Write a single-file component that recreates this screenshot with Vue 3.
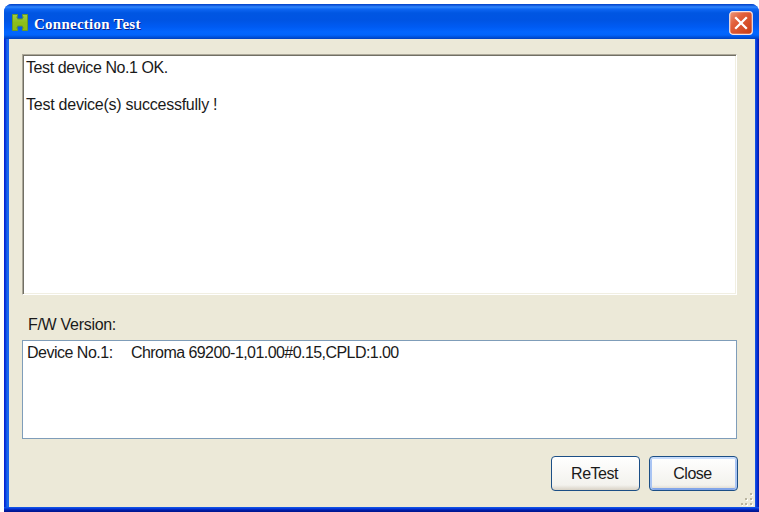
<script setup>
const messages = ['Test device No.1 OK.', '', 'Test device(s) successfully !']
const device = { name: 'Device No.1:', version: 'Chroma 69200-1,01.00#0.15,CPLD:1.00' }
</script>

<template>
  <div class="screen">
    <section class="window" role="dialog" aria-label="Connection Test">
      <header class="titlebar">
        <svg class="logo" width="16" height="17" viewBox="0 0 16 17">
          <defs>
            <linearGradient id="leaf" x1="0" y1="0" x2="0" y2="1">
              <stop offset="0" stop-color="#a3cc44" />
              <stop offset=".5" stop-color="#8cbf1c" />
              <stop offset="1" stop-color="#8cbb14" />
            </linearGradient>
          </defs>
          <path d="M.5 .5H5.5V2L4.8 3L5.5 4.5V5H10.5V4.5L11.2 3L10.5 2V.5H15.5V16.5H10.5V15L11.2 14L10.5 12.5V12H5.5V12.5L4.8 14L5.5 15V16.5H.5Z" fill="url(#leaf)" stroke="#659c28" stroke-width="1" />
        </svg>
        <h1 class="title">Connection Test</h1>
        <button class="exit" aria-label="Close window">
          <svg width="24" height="24" viewBox="0 0 24 24">
            <defs>
              <linearGradient id="red" x1="0" y1="0" x2="1" y2="1">
                <stop offset="0" stop-color="#ed9a7c" />
                <stop offset=".35" stop-color="#e2603b" />
                <stop offset="1" stop-color="#c83a12" />
              </linearGradient>
            </defs>
            <rect x=".7" y=".7" width="22.6" height="22.6" rx="3" fill="url(#red)" stroke="#f6e4e4" stroke-width="1.2" />
            <path d="M6.2 6.2L17.8 17.8M17.8 6.2L6.2 17.8" stroke="#fff" stroke-width="2.3" />
          </svg>
        </button>
      </header>
      <main class="body">
        <div class="log">
          <p v-for="(m, i) in messages" :key="i" class="line"><span :class="'m' + i">{{ m }}</span></p>
        </div>
        <div class="label">F/W Version:</div>
        <div class="list">
          <span class="name">{{ device.name }}</span>
          <span class="version">{{ device.version }}</span>
        </div>
        <footer class="actions">
          <button class="btn">ReTest</button>
          <button class="btn focused">Close</button>
        </footer>
        <svg class="grip" width="13" height="13" viewBox="0 0 13 13">
          <g fill="#fff"><path d="M10 1h2v2h-2zM10 6h2v2h-2zM5 6h2v2H5zM10 11h2v2h-2zM5 11h2v2H5zM1 11h1v2H1z" /></g>
          <g fill="#b9b49f"><path d="M9 0h2v2H9zM9 5h2v2H9zM4 5h2v2H4zM9 10h2v2H9zM4 10h2v2H4zM0 10h2v2H0z" /></g>
        </svg>
      </main>
    </section>
  </div>
</template>

<style>
body { margin: 0; background: #fff; overflow: hidden; }
</style>

<style scoped>
* { box-sizing: border-box; }
.screen { width: 759px; height: 512px; padding: 4px 0 0 4px; background: #fff; font-family: "Liberation Sans", Arial, sans-serif; font-size: 16px; color: #1a1a1a; }
.window {
  position: relative; width: 755px; height: 508px; display: flex; flex-direction: column;
  border-radius: 8px 8px 0 0; overflow: hidden; background: #0a48e0;
}
.titlebar {
  height: 35px; flex: none; display: flex; align-items: center; padding: 0 6px 0 8px;
  background: linear-gradient(to bottom, #0345c4 0, #0b50d8 1px, #3187fb 3px, #0d66f3 5px, #0056e2 9px, #0054e3 16px, #005bf3 23px, #0366fe 28px, #0264fb 31px, #0052dc 33px, #0040bd 35px);
}
.logo { flex: none; margin-top: 2px; }
.title {
  margin: 4px 0 0 6px; flex: 1; font: bold 15px/18px "Liberation Serif", "Times New Roman", serif;
  letter-spacing: .25px; color: #fff; text-shadow: 1px 1px 0 #0a1f8a; white-space: nowrap;
}
.exit { width: 24px; height: 24px; margin-top: 3px; padding: 0; border: 0; background: none; }
.exit svg { display: block; }
.body {
  flex: 1; margin: 0 4px 5px 5px; padding: 15px 18px 0 13px; display: flex; flex-direction: column;
  background: #ece9d8; position: relative;
}
.window::before {
  content: ""; position: absolute; left: 0; top: 35px; bottom: 0; width: 5px;
  background: linear-gradient(to right, #0019cf 0, #0831d9 1px, #0c41dc 2px, #166aee 3px, #1c62ec 5px);
}
.window::after {
  content: ""; position: absolute; right: 0; top: 35px; bottom: 0; width: 4px;
  background: linear-gradient(to right, #1960e6 0, #0b42dc 1px, #0831d9 2px, #001aa8 4px);
}
.body::after {
  content: ""; position: absolute; left: -5px; right: -4px; bottom: -5px; height: 5px; z-index: 1;
  background: linear-gradient(to bottom, #1660ea 0, #0b45de 1px, #0832d8 2px, #001ea8 3px, #00138c 5px);
}
.log {
  height: 241px; flex: none; padding: 3px 3px; background: #fff;
  border: 1px solid; border-color: #aca899 #fff #fff #aca899;
  box-shadow: inset 1px 1px 0 #716f64, inset -1px -1px 0 #f1efe2;
}
.line { margin: 0; height: 18.5px; line-height: 20px; white-space: pre; }
.m0 { letter-spacing: -.42px; }
.m2 { letter-spacing: -.24px; }
.label { height: 45px; flex: none; padding: 20px 0 0 6px; line-height: 20px; letter-spacing: -.3px; }
.list {
  height: 99px; flex: none; padding: 1px 4px; display: flex; background: #fff;
  border: 1px solid #7f9db9; line-height: 21px; white-space: nowrap;
}
.name { width: 104px; letter-spacing: -.5px; }
.version { letter-spacing: -.56px; }
.actions { display: flex; justify-content: flex-end; gap: 9px; margin: 17px -1px 0 0; }
.btn {
  width: 89px; height: 35px; padding: 0 2px 0 0; border: 1.5px solid #1c4f86; border-radius: 4px;
  background: linear-gradient(#fff, #f3f2ed 85%, #d8d2c5);
  font: 16px "Liberation Sans", Arial, sans-serif; letter-spacing: -.5px; color: #1a1a1a; white-space: nowrap;
}
.focused { box-shadow: inset 0 2px 0 #c8dcfb, inset 2px 0 0 #a9c4f3, inset -2px 0 0 #a9c4f3, inset 0 -2px 0 #82a5e8; }
.grip { position: absolute; right: 1px; bottom: 1px; }
</style>
